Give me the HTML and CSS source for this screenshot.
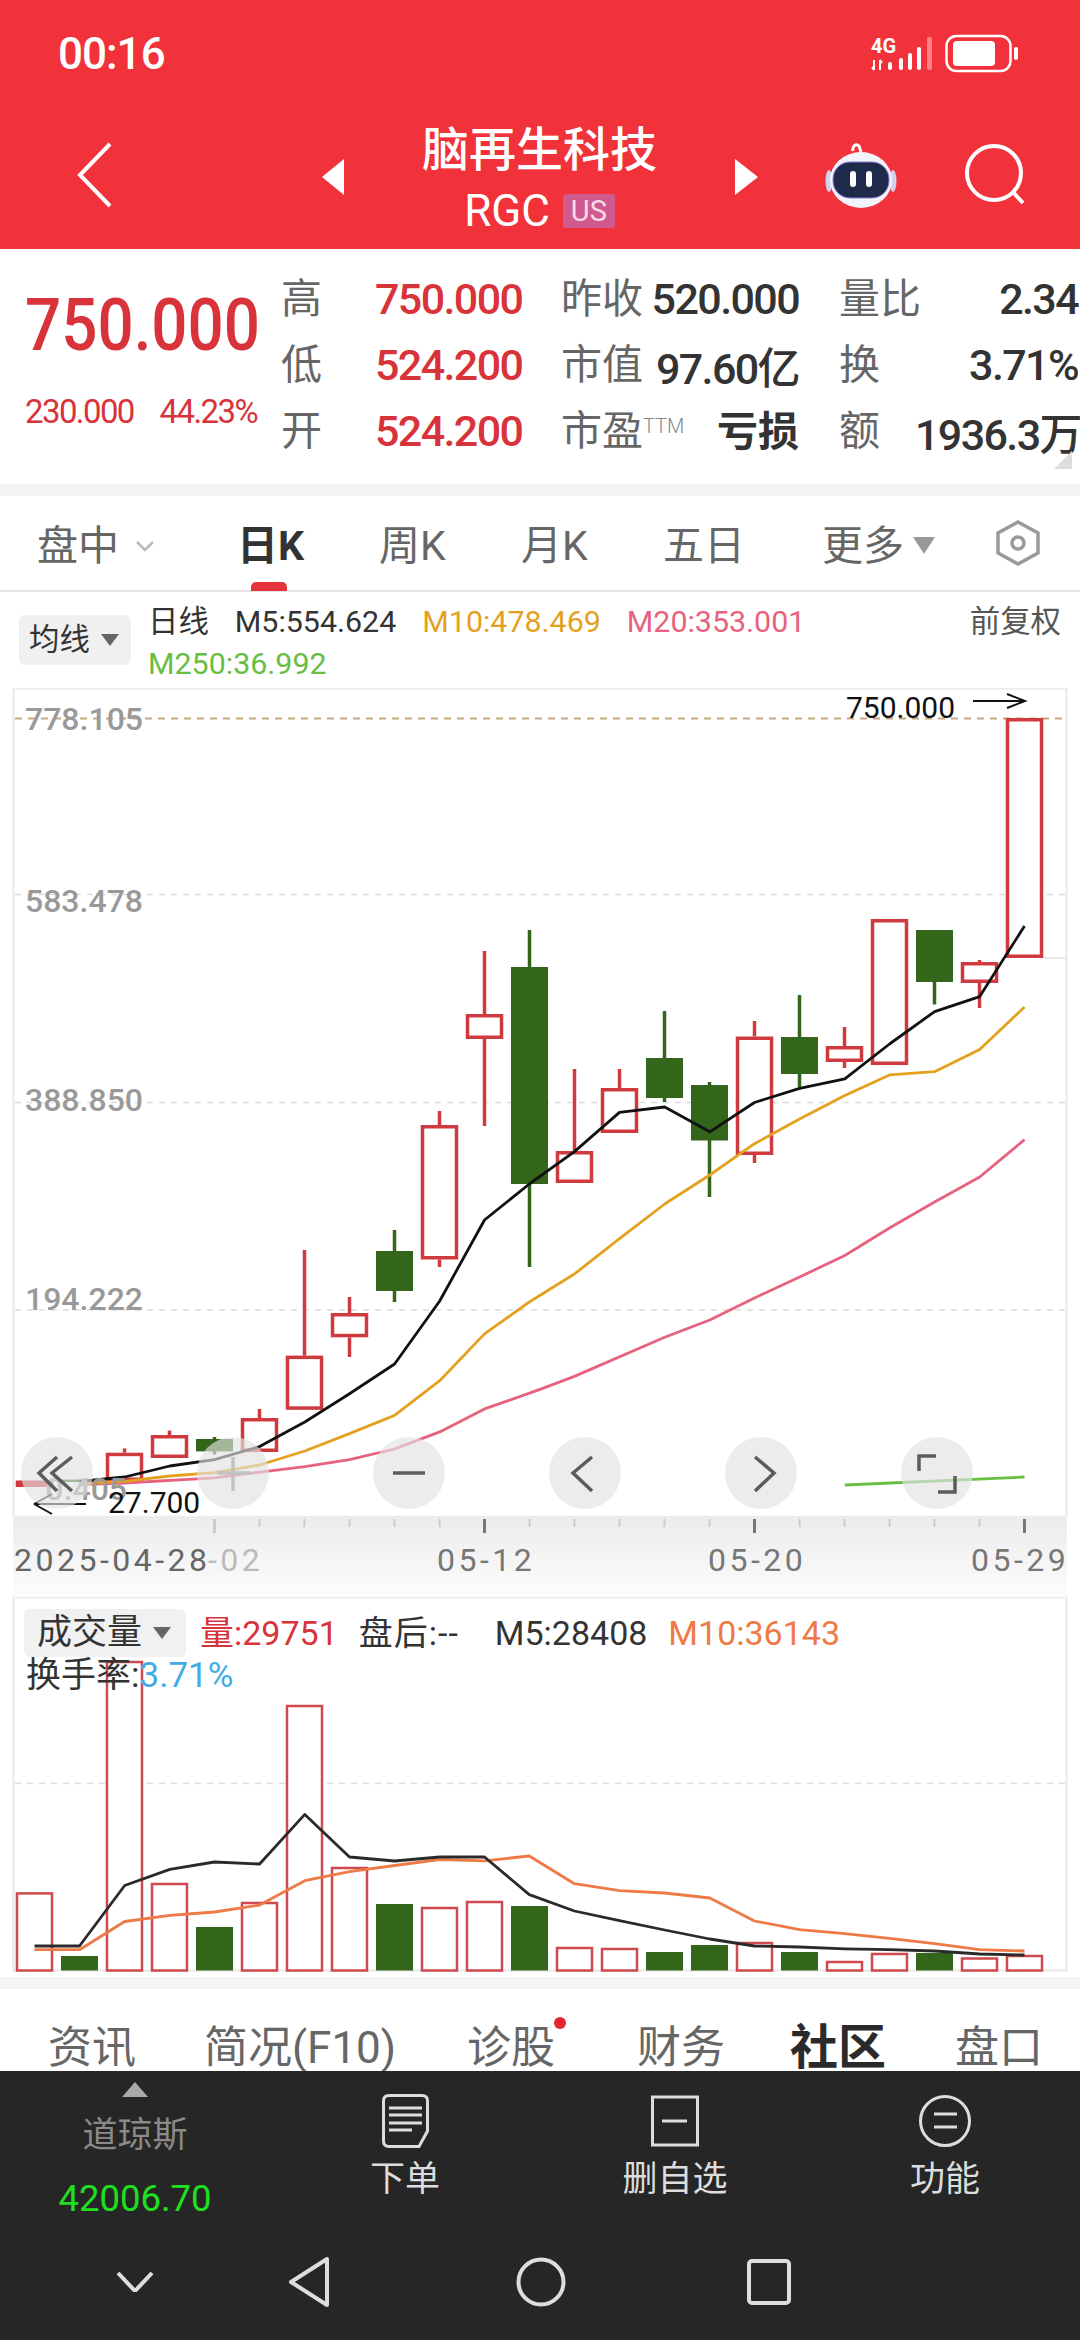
FILE: index.html
```html
<!DOCTYPE html>
<html lang="zh-CN">
<head>
  <meta charset="UTF-8">
  <title>脑再生科技 RGC</title>
  <link rel="stylesheet" href="styles.css">
</head>
<body>
  <div class="page">
    <header class="header">
      <div class="status">
        <span class="time">00:16</span>
        <svg class="status-icons" width="150" height="40" viewBox="871 34 150 40">
          <text class="net-text" x="871" y="53">4G</text>
          <path class="net-arrow" d="M874 60V70M872 67l2 3M880 60V70M880 60l2 3"/>
          <rect class="bar" x="888" y="62" width="4" height="8" rx="2"/>
          <rect class="bar" x="899" y="58" width="4" height="12" rx="2"/>
          <rect class="bar" x="908" y="53" width="4" height="17" rx="2"/>
          <rect class="bar" x="917" y="47" width="4" height="23" rx="2"/>
          <rect class="bar off" x="927" y="37" width="5" height="33" rx="2"/>
          <rect class="batt" x="946.5" y="36" width="64" height="35" rx="10"/>
          <rect class="batt-fill" x="953" y="41" width="42" height="25" rx="4"/>
          <rect class="batt-fill" x="1014" y="47" width="4" height="13" rx="2"/>
        </svg>
      </div>
      <div class="titlebar">
        <svg class="back" width="36" height="66" viewBox="0 0 36 66"><path d="M33 2 3 33l30 31"/></svg>
        <span class="tri-left"></span>
        <div class="title-block">
          <div class="title">脑再生科技</div>
          <div class="code">RGC<span class="badge">US</span></div>
        </div>
        <span class="tri-right"></span>
        <svg class="robot" width="72" height="66" viewBox="0 0 72 66">
          <path class="robot-ant" d="M28 9c-1-5 3-8 6-5 1 2 2 6 2 9"/>
          <ellipse class="robot-ear" cx="4" cy="39" rx="3.5" ry="11"/>
          <ellipse class="robot-ear" cx="68" cy="39" rx="3.5" ry="11"/>
          <ellipse class="robot-head" cx="36" cy="38" rx="31" ry="28"/>
          <rect class="robot-face" x="8" y="20" width="56" height="36" rx="17"/>
          <rect class="robot-eye" x="25" y="29" width="6" height="16" rx="3"/>
          <rect class="robot-eye" x="41" y="29" width="6" height="16" rx="3"/>
        </svg>
        <svg class="search" width="62" height="62" viewBox="0 0 62 62"><ellipse cx="29" cy="29" rx="27" ry="27"/><path d="M47 47l11 12"/></svg>
      </div>
    </header>

    <section class="quote">
      <div class="price-box">
        <div class="price">750.000</div>
        <div class="change"><span>230.000</span><span>44.23%</span></div>
      </div>
      <div class="quote-grid">
        <span class="q-label">高</span><span class="q-red">750.000</span>
        <span class="q-label">昨收</span><span class="q-val q-mid">520.000</span>
        <span class="q-label">量比</span><span class="q-val">2.34</span>
        <span class="q-label">低</span><span class="q-red">524.200</span>
        <span class="q-label">市值</span><span class="q-val q-mid">97.60亿</span>
        <span class="q-label">换</span><span class="q-val">3.71%</span>
        <span class="q-label">开</span><span class="q-red">524.200</span>
        <span class="q-label">市盈<sup class="ttm">TTM</sup></span><span class="q-val q-mid q-bold">亏损</span>
        <span class="q-label">额</span><span class="q-val">1936.3万</span>
      </div>
      <span class="corner"></span>
    </section>
    <div class="gap"></div>

    <nav class="tabs">
      <div class="tab tab-pan">盘中<svg width="20" height="12" viewBox="0 0 20 12"><path d="M2 2l8 8 8-8"/></svg></div>
      <div class="tab tab-k active">日K</div>
      <div class="tab tab-k">周K</div>
      <div class="tab tab-k">月K</div>
      <div class="tab tab-5">五日</div>
      <div class="tab tab-more">更多<i class="down-tri"></i></div>
      <svg class="hex" width="46" height="46" viewBox="0 0 46 46"><path d="M23 2 43 13V33L23 44 3 33V13Z"/><ellipse cx="23" cy="23" rx="6" ry="6"/></svg>
    </nav>

    <div class="legend">
      <div class="ma-btn">均线<i class="down-tri small"></i></div>
      <div class="legend-lines">
        <div class="legend-row">
          <span>日线</span><span>M5:554.624</span><span class="c-m10">M10:478.469</span><span class="c-m20">M20:353.001</span><span class="fq">前复权</span>
        </div>
        <div class="legend-row"><span class="c-m250">M250:36.992</span></div>
      </div>
    </div>

    <div class="chart">
      <svg id="kline" width="1080" height="909" viewBox="0 688 1080 909"></svg>
      <div class="float-btns">
        <div class="fbtn"><svg width="72" height="72" viewBox="0 0 72 72"><path d="M36 20 18 36l18 18M51 20 31 36l20 18"/></svg></div>
        <div class="fbtn"><svg class="faint" width="72" height="72" viewBox="0 0 72 72"><path d="M20 36H54M36 20V54"/></svg></div>
        <div class="fbtn"><svg width="72" height="72" viewBox="0 0 72 72"><path d="M20 36H52"/></svg></div>
        <div class="fbtn"><svg width="72" height="72" viewBox="0 0 72 72"><path d="M43 20 24 36l19 18"/></svg></div>
        <div class="fbtn"><svg width="72" height="72" viewBox="0 0 72 72"><path d="M30 20l19 16-19 18"/></svg></div>
        <div class="fbtn"><svg width="72" height="72" viewBox="0 0 72 72"><path d="M18 34V19H35M54 39V55H37"/></svg></div>
      </div>
    </div>

    <div class="vol">
      <svg id="volume" width="1080" height="380" viewBox="0 1597 1080 380"></svg>
      <div class="vol-legend">
        <div class="vol-row">
          <div class="vol-btn">成交量<i class="down-tri small"></i></div>
          <span class="c-red">量:29751</span><span class="after">盘后:--</span><span>M5:28408</span><span class="c-m10v">M10:36143</span>
        </div>
        <div class="vol-row2">换手率:<span class="c-blue">3.71%</span></div>
      </div>
    </div>
    <div class="gap"></div>

    <nav class="subtabs">
      <span>资讯</span>
      <span>简况(F10)</span>
      <span class="has-dot">诊股<i class="dot"></i></span>
      <span>财务</span>
      <span class="active">社区</span>
      <span>盘口</span>
    </nav>

    <footer class="dock">
      <div class="dock-row">
        <div class="dock-index">
          <i class="up-tri"></i>
          <div class="index-name">道琼斯</div>
          <div class="index-val">42006.70</div>
        </div>
        <div class="dock-item">
          <svg width="47" height="54" viewBox="0 0 47 54"><path d="M7 1.5H40Q45.5 1.5 45.5 7V37L37 52.5H7Q1.5 52.5 1.5 47V7Q1.5 1.5 7 1.5ZM7 14H40M7 21H40M7 29H40M7 36H30"/></svg>
          <span>下单</span>
        </div>
        <div class="dock-item">
          <svg width="48" height="54" viewBox="0 0 48 54"><path d="M1.5 3H46.5V51H1.5ZM11 27H36"/></svg>
          <span>删自选</span>
        </div>
        <div class="dock-item">
          <svg width="52" height="54" viewBox="0 0 52 54"><circle cx="26" cy="27" r="24.5"/><path d="M15 20H38M15 33H38"/></svg>
          <span>功能</span>
        </div>
      </div>
      <div class="sysnav">
        <svg class="n-chev" width="38" height="20" viewBox="0 0 38 20"><path d="M2 1 19 19 36 1"/></svg>
        <svg class="n-back" width="42" height="50" viewBox="0 0 42 50"><path d="M39 2V48L3 25Z"/></svg>
        <svg class="n-home" width="50" height="50" viewBox="0 0 50 50"><circle cx="25" cy="25" r="22.5"/></svg>
        <svg class="n-recent" width="44" height="46" viewBox="0 0 44 46"><rect x="2" y="2" width="40" height="42" rx="3"/></svg>
      </div>
    </footer>
  </div>

  <script>
    // x of candle i
    function cx(i) { return 34.5 + i * 45; }

    // [up?, top, bottom, wickTop, wickBottom]
    const candles = [
      [1,1480.5,1487,1480.5,1487],[0,1479.6,1482,1479.6,1482],[1,1452.7,1481,1448.4,1481],[1,1435,1458,1430.6,1458],
      [0,1439,1451.4,1437,1454.4],[1,1418,1452,1409,1452],[1,1355.6,1409.8,1250,1409.8],[1,1313,1337.3,1297,1356.9],
      [0,1251,1291,1230,1302],[1,1125,1259.5,1111,1267],[1,1014,1039,951,1126],[0,967,1184,930,1267],
      [1,1151,1183,1069,1183],[1,1088,1133,1069,1133],[0,1058,1098,1011,1102],[0,1085,1140.5,1082,1197],
      [1,1036.5,1155,1021,1163],[0,1037,1074,995,1087],[1,1046,1062,1027,1068],[1,919,1065,919,1065],
      [0,930,982,930,1004.5],[1,962,983,960,1008],[1,718,958,718,958]
    ];
    const m5 = [[79.5,1481.3],[124.7,1477],[169.8,1466],[214.5,1459.6],[259.6,1446.6],[304.8,1422],[349.5,1393.7],[394.6,1364],[439.7,1301],[484.5,1220],[529.3,1184],[574.4,1151.6],[619.5,1112.4],[664.7,1107],[709.8,1131.8],[754.5,1102.5],[799.6,1088.3],[844.8,1078.8],[889.5,1044],[934.6,1011.6],[979.7,996.6],[1024.5,926]];
    const m10 = [[79.5,1483.5],[124.7,1481.3],[169.8,1476],[214.5,1472.6],[259.6,1465],[304.8,1451],[349.5,1433.6],[394.6,1415.4],[439.7,1380.7],[484.5,1333.9],[529.3,1302],[574.4,1274],[619.5,1238.6],[664.7,1204],[709.8,1175],[754.5,1143.7],[799.6,1119],[844.8,1095.4],[889.5,1074.9],[934.6,1071.7],[979.7,1049.5],[1024.5,1007]];
    const m20 = [[79.5,1484.5],[124.7,1483],[214.5,1477.8],[304.8,1466.6],[349.5,1459.6],[394.6,1449],[439.7,1431.9],[484.5,1408.9],[540,1389.4],[574.4,1376.4],[664.7,1337.3],[709.8,1320],[754.5,1298],[799.6,1277],[844.8,1255.5],[889.5,1228],[934.6,1202],[979.7,1177],[1024.5,1139.7]];
    const m250 = [[844.8,1485],[1024.5,1477]];

    const volBars = [[1,1892.4],[0,1956],[1,1661],[1,1883],[0,1927],[1,1902],[1,1705],[1,1867],[0,1904],[1,1907],[1,1901],[0,1906],[1,1947],[1,1948],[0,1952],[0,1945],[1,1942],[0,1952],[1,1961],[1,1953],[0,1953],[1,1957.5],[1,1955]];
    const volM5 = [[34.5,1946],[79.5,1946],[124.7,1885.5],[169.8,1869.4],[214.5,1862],[259.6,1864],[304.8,1814.4],[349.5,1857],[394.6,1861],[439.7,1857],[484.5,1857],[529.3,1894.6],[574.4,1911],[619.5,1920.6],[664.7,1930],[709.8,1939],[754.5,1946],[799.6,1947],[844.8,1948.8],[889.5,1949.7],[934.6,1951],[979.7,1954],[1024.5,1955]];
    const volM10 = [[34.5,1949.7],[79.5,1949.7],[124.7,1921.5],[169.8,1915.4],[214.5,1912],[259.6,1905],[304.8,1880.7],[349.5,1871.6],[394.6,1865.5],[439.7,1859.5],[484.5,1860.8],[529.3,1856],[574.4,1883.7],[619.5,1890.7],[664.7,1893],[709.8,1898],[754.5,1921],[799.6,1929.7],[844.8,1933.6],[889.5,1938.4],[934.6,1943.6],[979.7,1949.7],[1024.5,1951]];

    function poly(points, cls) {
      return `<polyline class="${cls}" points="${points.map(p => p.join(',')).join(' ')}"/>`;
    }

    let k = '<defs><linearGradient id="axisBg" x1="0" y1="0" x2="0" y2="1"><stop offset="0" stop-color="#ececec"/><stop offset="1" stop-color="#fcfcfc"/></linearGradient></defs>';
    k += '<rect x="13" y="1517" width="1054" height="80" fill="url(#axisBg)"/>';
    k += '<rect class="frame" x="13.5" y="688.5" width="1053" height="828.5"/>';
    k += '<line class="grid-top" x1="15" x2="1065" y1="718.5" y2="718.5"/>';
    [894.5, 1102.5, 1310].forEach(y => { k += `<line class="grid" x1="15" x2="1065" y1="${y}" y2="${y}"/>`; });
    k += '<line class="prev" x1="1043" x2="1067" y1="958" y2="958"/>';

    candles.forEach((c, i) => {
      const x = cx(i);
      if (c[0]) {
        if (c[3] < c[1]) k += `<line class="wick-up" x1="${x}" x2="${x}" y1="${c[3]}" y2="${c[1]}"/>`;
        if (c[4] > c[2]) k += `<line class="wick-up" x1="${x}" x2="${x}" y1="${c[2]}" y2="${c[4]}"/>`;
        k += `<rect class="body-up" x="${x - 17}" y="${c[1] + 1.75}" width="34" height="${c[2] - c[1] - 3.5}"/>`;
      } else {
        k += `<line class="wick-down" x1="${x}" x2="${x}" y1="${c[3]}" y2="${c[4]}"/>`;
        k += `<rect class="body-down" x="${x - 18.5}" y="${c[1]}" width="37" height="${c[2] - c[1]}"/>`;
      }
    });
    k += poly(m250, 'ma m250') + poly(m20, 'ma m20') + poly(m10, 'ma m10') + poly(m5, 'ma m5');

    k += '<text class="axis-y" x="143" y="730">778.105</text>';
    k += '<text class="axis-y" x="143" y="911.5">583.478</text>';
    k += '<text class="axis-y" x="143" y="1111">388.850</text>';
    k += '<text class="axis-y" x="143" y="1310">194.222</text>';
    k += '<text class="axis-y" x="127" y="1500">0.405</text>';
    k += '<text class="mark" x="846" y="718">750.000</text>';
    k += '<path class="mark-arrow" d="M973 701H1025M1007 694l18 7-18 7"/>';
    k += '<text class="mark" x="108" y="1513">27.700</text>';
    k += '<path class="mark-arrow" d="M86 1504H36M52 1514l-18-10M52 1494l-18 10"/>';

    for (let i = 4; i < 23; i++) {
      const major = (i - 4) % 6 === 0 && i > 4;
      k += `<line class="${major ? 'tick-major' : i === 4 ? 'tick-first' : 'tick'}" x1="${cx(i)}" x2="${cx(i)}" y1="1519" y2="${major || i === 4 ? 1533 : 1527}"/>`;
    }
    k += '<text class="axis-x dark" x="14" y="1571">2025-04-28</text>';
    k += '<text class="axis-x faint" x="208" y="1571">-02</text>';
    k += '<text class="axis-x" x="437" y="1571">05-12</text>';
    k += '<text class="axis-x" x="708" y="1571">05-20</text>';
    k += '<text class="axis-x" x="971" y="1571">05-29</text>';
    document.getElementById('kline').innerHTML = k;

    let v = '<rect class="frame" x="13.5" y="1597.5" width="1053" height="373"/>';
    v += '<line class="grid" x1="15" x2="1065" y1="1783.5" y2="1783.5"/>';
    volBars.forEach((b, i) => {
      const x = cx(i);
      if (b[0]) v += `<rect class="vol-up" x="${x - 17.5}" y="${b[1] + 1}" width="35" height="${1969.5 - b[1]}"/>`;
      else v += `<rect class="body-down" x="${x - 18.5}" y="${b[1]}" width="37" height="${1970.5 - b[1]}"/>`;
    });
    v += poly(volM10, 'ma vm10') + poly(volM5, 'ma vm5');
    document.getElementById('volume').innerHTML = v;
  </script>
</body>
</html>
```

FILE: styles.css
```css
* {
  box-sizing: border-box;
}
body {
  margin: 0;
  background: #fff;
  font-family: Roboto, "Noto Sans CJK SC", sans-serif;
}
svg {
  display: block;
}
.page {
  width: 1080px;
  height: 2340px;
  overflow: hidden;
  position: relative;
}

/* header */
.header {
  height: 249px;
  background: #f1323b;
  color: #fff;
}
.status {
  height: 108px;
  display: flex;
  align-items: center;
  justify-content: space-between;
  padding: 0 59px 0 58px;
}
.time {
  font-size: 44px;
  font-weight: 500;
  letter-spacing: -1px;
}
.net-text {
  fill: #fff;
  font-size: 20px;
  font-weight: 700;
}
.net-arrow {
  stroke: #fff;
  stroke-width: 2;
  fill: none;
}
.bar {
  fill: #fff;
}
.bar.off {
  fill: #f98087;
}
.batt {
  fill: none;
  stroke: #fff;
  stroke-width: 2.5;
}
.batt-fill {
  fill: #fff;
}
.titlebar {
  height: 141px;
  padding: 0 0 8px 77px;
  display: flex;
  align-items: center;
}
.back path {
  fill: none;
  stroke: #fff;
  stroke-width: 4;
}
.tri-left,
.tri-right {
  width: 0;
  height: 0;
  border-top: 18px solid transparent;
  border-bottom: 18px solid transparent;
  margin-top: 5px;
}
.tri-left {
  border-right: 22px solid #fff;
  margin-left: 209px;
}
.tri-right {
  border-left: 23px solid #fff;
}
.title-block {
  width: 391px;
  margin-top: 13px;
  text-align: center;
}
.title {
  font-size: 47px;
  font-weight: 500;
  line-height: 60px;
}
.code {
  font-size: 44px;
  line-height: 62px;
  display: flex;
  justify-content: center;
  align-items: center;
}
.badge {
  margin-left: 13px;
  width: 52px;
  height: 34px;
  background: #d05a8e;
  border-radius: 3px;
  font-size: 29px;
  line-height: 34px;
  color: #f6dbe6;
}
.robot {
  margin-left: 67px;
}
.robot-ant {
  fill: none;
  stroke: #fff;
  stroke-width: 3;
}
.robot-ear {
  fill: #cfd3ef;
}
.robot-head {
  fill: #f3f3fb;
}
.robot-face {
  fill: #1e2b4a;
  stroke: #8c7fd8;
  stroke-width: 1;
}
.robot-eye {
  fill: #fff;
}
.search {
  margin-left: 68px;
}
.search ellipse,
.search path {
  fill: none;
  stroke: #fff;
  stroke-width: 4;
}

/* quote block */
.quote {
  height: 235px;
  position: relative;
  display: flex;
}
.price-box {
  width: 281px;
  padding: 37px 0 0 25px;
  color: #d8333a;
}
.price {
  font-size: 72px;
  font-weight: 500;
  line-height: 80px;
  transform: scaleX(.885);
  transform-origin: left;
  white-space: nowrap;
}
.change {
  margin-top: 26px;
  width: 232px;
  display: flex;
  justify-content: space-between;
  font-size: 33px;
  line-height: 40px;
  letter-spacing: -1.6px;
}
.quote-grid {
  padding-top: 16px;
  display: grid;
  grid-template-columns: 94px 186px 90px 188px 76px 163px;
  grid-auto-rows: 66px;
  align-items: center;
  font-size: 41px;
  white-space: nowrap;
}
.q-label {
  color: #666;
  padding-bottom: 6px;
}
.q-red {
  color: #d8333a;
  font-size: 43px;
  font-weight: 500;
  letter-spacing: -1.6px;
  padding-top: 2px;
}
.q-val {
  color: #333;
  font-size: 43px;
  font-weight: 500;
  letter-spacing: -1.6px;
  text-align: right;
  padding-top: 2px;
}
.q-mid {
  padding-right: 40px;
}
.q-bold {
  font-size: 41px;
  font-weight: 700;
  letter-spacing: 0;
  padding-top: 0;
  padding-bottom: 4px;
}
.ttm {
  font-size: 20px;
  font-weight: 300;
  vertical-align: 12px;
  line-height: 0;
  color: #888;
}
.corner {
  position: absolute;
  right: 8px;
  bottom: 15px;
  border-left: 18px solid transparent;
  border-bottom: 18px solid #ddd;
}
.gap {
  height: 12px;
  background: #f4f4f4;
}

/* period tabs */
.tabs {
  height: 96px;
  padding: 5px 0 0 37px;
  display: flex;
  align-items: center;
  border-bottom: 2px solid #e4e4e4;
  color: #666;
  font-size: 41px;
  line-height: 60px;
}
.tab {
  display: flex;
  align-items: center;
  flex: none;
}
.tab-pan {
  width: 200px;
}
.tab-pan svg {
  margin-left: 16px;
}
.tab-pan path {
  fill: none;
  stroke: #bbb;
  stroke-width: 2.5;
}
.tab-k {
  width: 142px;
}
.tab-5 {
  width: 159px;
}
.tab-more {
  width: 173px;
}
.tab.active {
  position: relative;
  font-weight: 700;
  color: #333;
}
.tab.active::after {
  content: "";
  position: absolute;
  left: 14px;
  top: 66px;
  width: 36px;
  height: 9px;
  border-radius: 5px 5px 0 0;
  background: #e5333a;
}
.down-tri {
  display: block;
  margin-left: 9px;
  border-left: 11px solid transparent;
  border-right: 11px solid transparent;
  border-top: 17px solid #999;
}
.down-tri.small {
  border-left-width: 9px;
  border-right-width: 9px;
  border-top: 12px solid #666;
}
.hex {
  margin-top: -5px;
}
.hex path,
.hex ellipse {
  fill: none;
  stroke: #999;
  stroke-width: 3.5;
}

/* MA legend */
.legend {
  height: 96px;
  padding: 12px 19px 0;
  display: flex;
  font-size: 30.4px;
  line-height: 36px;
  color: #333;
}
.ma-btn {
  flex: none;
  width: 112px;
  height: 50px;
  margin-top: 11px;
  padding-left: 10px;
  display: flex;
  align-items: center;
  border-radius: 6px;
  background: #f0f0f0;
}
.ma-btn .down-tri {
  margin-left: 11px;
}
.legend-lines {
  flex: 1;
  margin-left: 17px;
}
.legend-row {
  display: flex;
  gap: 26px;
  margin-bottom: 6px;
}
.fq {
  margin-left: auto;
  color: #555;
}
.c-m10 { color: #e3a11e; }
.c-m20 { color: #e7627e; }
.c-m250 { color: #68bd43; }
.c-red { color: #d8333a; }
.c-blue { color: #43ace6; }
.c-m10v { color: #ee7a45; }

/* k-line chart */
.chart {
  height: 909px;
  position: relative;
}
.frame {
  fill: none;
  stroke: #ececec;
  stroke-width: 2.5;
}
.grid {
  stroke: #ddd;
  stroke-width: 1.5;
  stroke-dasharray: 6 6;
}
.grid-top {
  stroke: #c4a882;
  stroke-width: 2;
  stroke-dasharray: 7 6;
}
.prev {
  stroke: #e8e8e8;
  stroke-width: 2;
}
.wick-up {
  stroke: #cf3a3f;
  stroke-width: 3.5;
}
.wick-down {
  stroke: #33651a;
  stroke-width: 3.5;
}
.body-up {
  fill: #fff;
  stroke: #cf3a3f;
  stroke-width: 3.5;
}
.body-down {
  fill: #33651a;
}
.ma {
  fill: none;
  stroke-width: 2.8;
  stroke-linejoin: round;
}
.m5 { stroke: #111; }
.m10 { stroke: #e3a11e; }
.m20 { stroke: #e7627e; }
.m250 { stroke: #68bd43; }
.axis-y {
  fill: #999;
  font-size: 32px;
  font-weight: 500;
  text-anchor: end;
}
.mark {
  fill: #111;
  font-size: 30px;
}
.mark-arrow {
  fill: none;
  stroke: #111;
  stroke-width: 2;
}
.tick {
  stroke: #ccc;
  stroke-width: 2;
}
.tick-major {
  stroke: #777;
  stroke-width: 3;
}
.tick-first {
  stroke: #ccc;
  stroke-width: 3;
}
.axis-x {
  fill: #777;
  font-size: 32px;
  letter-spacing: 3.5px;
}
.axis-x.dark {
  fill: #666;
}
.axis-x.faint {
  fill: #bbb;
}
.float-btns {
  position: absolute;
  left: 21px;
  top: 749px;
  display: flex;
  gap: 104px;
}
.fbtn {
  width: 72px;
  height: 72px;
  border-radius: 50%;
  background: rgba(226, 226, 226, .65);
}
.fbtn path {
  fill: none;
  stroke: #5c5c5c;
  stroke-width: 3.5;
}
.fbtn .faint path {
  stroke: #c2c2c2;
}

/* volume chart */
.vol {
  height: 380px;
  position: relative;
}
.vol-up {
  fill: #fff;
  stroke: #cf4a4f;
  stroke-width: 2.5;
}
.vm5 { stroke: #2a2a2a; }
.vm10 { stroke: #ee7a45; }
.vol-legend {
  position: absolute;
  left: 24px;
  top: 12px;
  font-size: 34px;
  line-height: 48px;
  color: #333;
}
.vol-row {
  display: flex;
  align-items: center;
  gap: 21px;
  white-space: nowrap;
}
.vol-btn {
  width: 162px;
  height: 48px;
  padding-left: 13px;
  margin-right: -7px;
  display: flex;
  align-items: center;
  background: rgba(240, 240, 240, .95);
  border-radius: 6px;
  font-size: 35px;
}
.vol-btn .down-tri {
  margin-left: 11px;
}
.after {
  width: 115px;
  letter-spacing: 1px;
}
.vol-row2 {
  margin: 1px 0 0 2px;
  line-height: 36px;
  font-size: 35px;
}

/* bottom tabs */
.subtabs {
  height: 82px;
  padding: 37px 0 0 48px;
  display: grid;
  grid-template-columns: 156px 263px 170px 153px 165px auto;
  overflow: hidden;
  font-size: 44px;
  line-height: 44px;
  color: #666;
  white-space: nowrap;
}
.subtabs .active {
  font-size: 48px;
  font-weight: 700;
  color: #2a2a2a;
}
.has-dot {
  position: relative;
}
.dot {
  position: absolute;
  left: 87px;
  top: -9px;
  width: 12px;
  height: 12px;
  border-radius: 50%;
  background: #e5262e;
}

/* dock */
.dock {
  height: 269px;
  background: #262626;
}
.dock-row {
  height: 166px;
  display: grid;
  grid-template-columns: repeat(4, 270px);
}
.dock-index,
.dock-item {
  display: flex;
  flex-direction: column;
  align-items: center;
}
.dock-index {
  padding-top: 11px;
}
.up-tri {
  display: block;
  border-left: 13px solid transparent;
  border-right: 13px solid transparent;
  border-bottom: 15px solid #aaa;
}
.index-name {
  margin-top: 21px;
  font-size: 35px;
  line-height: 36px;
  color: #8a8a8a;
}
.index-val {
  margin-top: 25px;
  font-size: 36.5px;
  line-height: 40px;
  color: #1ee01e;
}
.dock-item {
  padding-top: 23px;
  font-size: 35px;
  line-height: 36px;
  color: #ddd;
}
.dock-item span {
  margin-top: 14px;
}
.dock-item path,
.dock-item circle {
  fill: none;
  stroke: #ddd;
  stroke-width: 3;
}
.sysnav {
  height: 90px;
  padding-left: 116px;
  display: flex;
  align-items: center;
}
.sysnav path,
.sysnav circle,
.sysnav rect {
  fill: none;
  stroke: #ddd;
  stroke-width: 4;
  stroke-linejoin: round;
}
.n-back {
  margin-left: 134px;
}
.n-home {
  margin-left: 186px;
}
.n-recent {
  margin-left: 181px;
}
```
